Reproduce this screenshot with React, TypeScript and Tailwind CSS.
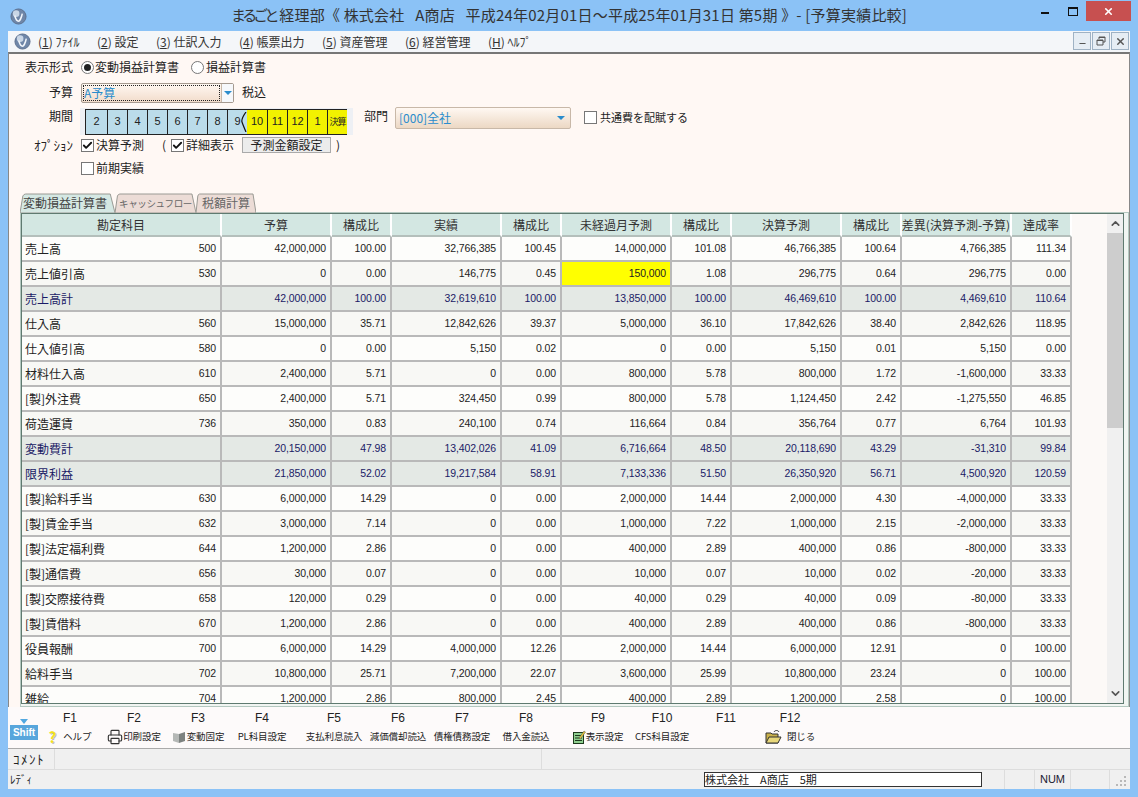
import { Check, Printer, X, Minus, ChevronUp, ChevronDown } from "lucide-react";

type Row = { name: string; code?: string; vals: string[]; kind?: "total"; hit?: number };

const rows: Row[] = [
  { name: "売上高", code: "500", vals: ["42,000,000", "100.00", "32,766,385", "100.45", "14,000,000", "101.08", "46,766,385", "100.64", "4,766,385", "111.34"] },
  { name: "売上値引高", code: "530", vals: ["0", "0.00", "146,775", "0.45", "150,000", "1.08", "296,775", "0.64", "296,775", "0.00"], hit: 4 },
  { name: "売上高計", kind: "total", vals: ["42,000,000", "100.00", "32,619,610", "100.00", "13,850,000", "100.00", "46,469,610", "100.00", "4,469,610", "110.64"] },
  { name: "仕入高", code: "560", vals: ["15,000,000", "35.71", "12,842,626", "39.37", "5,000,000", "36.10", "17,842,626", "38.40", "2,842,626", "118.95"] },
  { name: "仕入値引高", code: "580", vals: ["0", "0.00", "5,150", "0.02", "0", "0.00", "5,150", "0.01", "5,150", "0.00"] },
  { name: "材料仕入高", code: "610", vals: ["2,400,000", "5.71", "0", "0.00", "800,000", "5.78", "800,000", "1.72", "-1,600,000", "33.33"] },
  { name: "[製]外注費", code: "650", vals: ["2,400,000", "5.71", "324,450", "0.99", "800,000", "5.78", "1,124,450", "2.42", "-1,275,550", "46.85"] },
  { name: "荷造運賃", code: "736", vals: ["350,000", "0.83", "240,100", "0.74", "116,664", "0.84", "356,764", "0.77", "6,764", "101.93"] },
  { name: "変動費計", kind: "total", vals: ["20,150,000", "47.98", "13,402,026", "41.09", "6,716,664", "48.50", "20,118,690", "43.29", "-31,310", "99.84"] },
  { name: "限界利益", kind: "total", vals: ["21,850,000", "52.02", "19,217,584", "58.91", "7,133,336", "51.50", "26,350,920", "56.71", "4,500,920", "120.59"] },
  { name: "[製]給料手当", code: "630", vals: ["6,000,000", "14.29", "0", "0.00", "2,000,000", "14.44", "2,000,000", "4.30", "-4,000,000", "33.33"] },
  { name: "[製]賃金手当", code: "632", vals: ["3,000,000", "7.14", "0", "0.00", "1,000,000", "7.22", "1,000,000", "2.15", "-2,000,000", "33.33"] },
  { name: "[製]法定福利費", code: "644", vals: ["1,200,000", "2.86", "0", "0.00", "400,000", "2.89", "400,000", "0.86", "-800,000", "33.33"] },
  { name: "[製]通信費", code: "656", vals: ["30,000", "0.07", "0", "0.00", "10,000", "0.07", "10,000", "0.02", "-20,000", "33.33"] },
  { name: "[製]交際接待費", code: "658", vals: ["120,000", "0.29", "0", "0.00", "40,000", "0.29", "40,000", "0.09", "-80,000", "33.33"] },
  { name: "[製]賃借料", code: "670", vals: ["1,200,000", "2.86", "0", "0.00", "400,000", "2.89", "400,000", "0.86", "-800,000", "33.33"] },
  { name: "役員報酬", code: "700", vals: ["6,000,000", "14.29", "4,000,000", "12.26", "2,000,000", "14.44", "6,000,000", "12.91", "0", "100.00"] },
  { name: "給料手当", code: "702", vals: ["10,800,000", "25.71", "7,200,000", "22.07", "3,600,000", "25.99", "10,800,000", "23.24", "0", "100.00"] },
  { name: "雑給", code: "704", vals: ["1,200,000", "2.86", "800,000", "2.45", "400,000", "2.89", "1,200,000", "2.58", "0", "100.00"] },
];

const headers = ["勘定科目", "予算", "構成比", "実績", "構成比", "未経過月予測", "構成比", "決算予測", "構成比", "差異(決算予測-予算)", "達成率"];
const gridCols = "grid-cols-[200px_110px_60px_110px_60px_110px_60px_110px_60px_110px_60px]";

const menus = [
  { key: "1", label: "ﾌｧｲﾙ", w: "w-[59px]" },
  { key: "2", label: "設定", w: "w-[59px]" },
  { key: "3", label: "仕訳入力", w: "w-[83px]" },
  { key: "4", label: "帳票出力", w: "w-[83px]" },
  { key: "5", label: "資産管理", w: "w-[83px]" },
  { key: "6", label: "経営管理", w: "w-[83px]" },
  { key: "H", label: "ﾍﾙﾌﾟ", w: "w-[59px]" },
];

const Globe = () => (
  <svg width="17" height="17" viewBox="0 0 18 18">
    <circle cx="9" cy="9" r="8" fill="#6f86a8" stroke="#5b6f8c" />
    <circle cx="6.5" cy="6" r="3.5" fill="#c9d6e6" />
    <path d="M5 8c1 4 3 6 4 6s3-3 4-8" fill="none" stroke="#f2f6fb" strokeWidth="1.6" />
  </svg>
);

const Radio = ({ on }: { on?: boolean }) => (
  <span className="w-[13px] h-[13px] rounded-full border border-[#777] bg-white flex items-center justify-center">
    {on && <span className="w-[7px] h-[7px] rounded-full bg-[#222]" />}
  </span>
);

const Box = ({ on }: { on?: boolean }) => (
  <span className="w-[13px] h-[13px] border border-[#777] bg-white flex items-center justify-center">
    {on && <Check size={11} strokeWidth={4} className="text-[#111]" />}
  </span>
);

const ComboArrow = () => (
  <span className="w-0 h-0 border-x-[4px] border-x-transparent border-t-[4px] border-t-[#2a8ccc]" />
);

const Tab = ({ label, active, w, size }: { label: string; active?: boolean; w: string; size: string }) => (
  <div className={`relative h-[20px] ${w} ${size} flex items-center justify-center whitespace-nowrap ${active ? "text-[#444] pr-[5px]" : "text-[#666]"}`}>
    <svg className="absolute inset-0 w-full h-full" viewBox="0 0 100 20" preserveAspectRatio="none">
      <path
        d="M0 20 L3 3 Q4 1 6 1 L95 1 L100 20 Z"
        fill={active ? "#d5e8e3" : "#ecdcd6"}
        stroke="#9a9a94"
        vectorEffect="non-scaling-stroke"
      />
    </svg>
    <span className="relative">{label}</span>
  </div>
);

const fkeys = [
  ["F1", "ヘルプ", "help"],
  ["F2", "印刷設定", "print"],
  ["F3", "変動固定", "box"],
  ["F4", "PL科目設定", ""],
  ["F5", "支払利息読入", ""],
  ["F6", "減価償却読込", ""],
  ["F7", "債権債務設定", ""],
  ["F8", "借入金読込", ""],
  ["F9", "表示設定", "note"],
  ["F10", "CFS科目設定", ""],
  ["F11", "", ""],
  ["F12", "閉じる", "folder"],
];

const FIcon = ({ type }: { type: string }) => {
  if (type === "help") return <span className="text-[#f2e21c] text-[15px] font-bold leading-none mr-[7px] [text-shadow:1px_1px_0_#bbb]">?</span>;
  if (type === "print") return <Printer size={16} strokeWidth={1.7} className="text-[#333]" />;
  if (type === "box")
    return (
      <svg width="14" height="12" viewBox="0 0 14 12" className="mr-[1px]">
        <path d="M1 2l6 1v9l-6-2z" fill="#b5b8b6" />
        <path d="M7 3l6-2v9l-6 2z" fill="#7d8280" />
      </svg>
    );
  if (type === "note")
    return (
      <svg width="13" height="14" viewBox="0 0 13 14">
        <rect x="0.5" y="2.5" width="10" height="11" fill="#8fcf8f" stroke="#1c3a1c" />
        <path d="M2 5.5h7M2 8h7M2 10.5h7" stroke="#1c3a1c" />
        <path d="M6 8l5-7 1.5 1-5 7z" fill="#e8c63a" stroke="#555" strokeWidth="0.5" />
      </svg>
    );
  if (type === "folder")
    return (
      <svg width="17" height="15" viewBox="0 0 17 15" className="mr-[5px]">
        <path d="M1 14V4h5l1 1h6v9z" fill="#c8b04a" stroke="#333" />
        <path d="M1 14l3-6h12l-3 6z" fill="#e8d77a" stroke="#333" />
        <path d="M9 3c1-2 4-2 5 0" fill="none" stroke="#333" />
      </svg>
    );
  return null;
};

const MdiBtn = ({ children }: { children: React.ReactNode }) => (
  <span className="w-[18px] h-[18px] border border-[#9fb2c4] bg-[#e6edf4] flex items-center justify-center text-[#555]">{children}</span>
);

export default function App() {
  const cjk = { fontFamily: '"Noto Sans CJK JP", sans-serif' };
  const latin = { fontFamily: '"Liberation Sans", sans-serif' };
  return (
    <div className="w-[1138px] h-[797px] overflow-hidden bg-[#8bc2f6] flex flex-col text-[#222] text-[12px]" style={cjk}>
      {/* title bar */}
      <div className="h-[31px] shrink-0 relative flex items-center justify-center text-[15px] tracking-[0.2px] text-[#333]">
        <span className="absolute left-[10px] top-[8px]"><Globe /></span>
        <span className="whitespace-pre">
          <span className="tracking-[-3.8px]">まるごと</span> 経理部《 株式会社{"   "}A商店{"   "}平成24年02月01日～平成25年01月31日 第5期 》- [予算実績比較]
        </span>
        <div className="absolute right-[7px] top-[1px] flex items-start">
          <span className="w-[30px] h-[20px] flex items-center justify-center"><span className="w-[8px] h-[2px] bg-[#111] mt-[4px]" /></span>
          <span className="w-[26px] h-[20px] flex items-center justify-center"><span className="w-[10px] h-[9px] border border-[#111] border-t-2" /></span>
          <span className="w-[45px] h-[20px] bg-[#c75050] flex items-center justify-center"><X size={11} strokeWidth={3.5} className="text-white" /></span>
        </div>
      </div>

      <div className="flex-1 mx-[8px] flex flex-col min-h-0">
        {/* menu bar */}
        <div className="h-[21px] shrink-0 bg-[#f4f6f9] flex items-center relative">
          <span className="ml-[6px] w-[24px] flex"><Globe /></span>
          {menus.map((m) => (
            <span key={m.key} className={`${m.w} whitespace-nowrap text-[12px] text-[#333]`}>
              (<span className="underline">{m.key}</span>) {m.label}
            </span>
          ))}
          <div className="absolute right-[1px] top-[1px] flex gap-[1px]">
            <MdiBtn><Minus size={9} strokeWidth={3} className="mt-[5px]" /></MdiBtn>
            <MdiBtn>
              <svg width="10" height="10" viewBox="0 0 10 10" fill="none" stroke="#555">
                <path d="M3 3V1h6v5H7" />
                <path d="M1 4h6v5H1z" />
                <path d="M3 1.5h6M1 4.5h6" />
              </svg>
            </MdiBtn>
            <MdiBtn><X size={11} strokeWidth={3} /></MdiBtn>
          </div>
        </div>

        {/* main */}
        <div className="h-[655px] shrink-0 bg-[#fff8f4] border-t-2 border-t-[#777] border-x border-x-[#888] flex flex-col pl-[11px]">
          <div className="h-[26px] flex items-center">
            <span className="w-[53px] text-right">表示形式</span>
            <span className="ml-[8px]"><Radio on /></span>
            <span className="ml-[1px]">変動損益計算書</span>
            <span className="ml-[12px]"><Radio /></span>
            <span className="ml-[2px]">損益計算書</span>
          </div>
          <div className="h-[24px] flex items-center">
            <span className="w-[53px] text-right">予算</span>
            <div className="ml-[8px] mt-[1px] w-[153px] h-[20px] rounded-[2px] border border-[#a59a90] bg-gradient-to-b from-[#fff8f2] to-[#f2dccb] flex items-center">
              <span className="flex-1 h-[16px] mx-[1px] border border-dotted border-[#222] flex items-center text-[#2a8ccc] leading-none">A予算</span>
              <span className="w-[12px] self-stretch border-l border-[#c8b8a8] bg-[#f6f8fb] flex items-center justify-center"><ComboArrow /></span>
            </div>
            <span className="ml-[8px]">税込</span>
          </div>
          <div className="h-[29px] flex items-start">
            <span className="w-[53px] text-right mt-[3px]">期間</span>
            <div className="ml-[7px] mt-[4px] w-[273px] h-[27px] bg-[#eef0f4] pl-[5px] flex items-center relative">
              <div className="h-[26px] flex border-y border-[#222] text-[11px] leading-none" style={latin}>
                {["2", "3", "4", "5", "6", "7", "8", "9"].map((m, i) => (
                  <span key={m} className={`${i === 0 ? "w-[22px]" : "w-[20px]"} bg-[#bbdcea] border-l border-[#222] flex items-center justify-center`}>{m}</span>
                ))}
                {["10", "11", "12", "1"].map((m, i) => (
                  <span key={m} className={`${i === 0 ? "w-[21px]" : "w-[20px]"} bg-[#f2f200] border-r border-[#222] flex items-center justify-center`}>{m}</span>
                ))}
                <span className="w-[19px] bg-[#f2f200] flex items-center justify-center text-[9px] tracking-[-1px]" style={cjk}>決算</span>
              </div>
              <svg className="absolute left-[161px] top-[4px]" width="6" height="20" viewBox="0 0 6 20" fill="none" stroke="#111" strokeWidth="1.2">
                <path d="M5 0Q0 7 1 10T5 20" />
              </svg>
            </div>
            <span className="ml-[11px] mt-[3px]">部門</span>
            <div className="ml-[7px] mt-[3px] w-[176px] h-[22px] rounded-[2px] border border-[#c8b8a8] bg-gradient-to-b from-[#fff8f2] to-[#ecd8c4] flex items-center justify-between">
              <span className="pl-[3px] text-[#2a8ccc] text-[12px]">[000]全社</span>
              <span className="mr-[5px] flex"><ComboArrow /></span>
            </div>
            <span className="ml-[13px] mt-[7px]"><Box /></span>
            <span className="ml-[3px] mt-[5px] text-[11px]">共通費を配賦する</span>
          </div>
          <div className="h-[24px] flex items-center">
            <span className="w-[53px] text-right text-[13px] whitespace-nowrap">ｵﾌﾟｼｮﾝ</span>
            <span className="ml-[8px]"><Box on /></span>
            <span className="ml-[2px]">決算予測</span>
            <span className="ml-[18px]">(</span>
            <span className="ml-[5px]"><Box on /></span>
            <span className="ml-[2px]">詳細表示</span>
            <span className="ml-[8px] w-[89px] h-[16px] border border-[#aaa] bg-[#ececec] flex items-center justify-center leading-none">予測金額設定</span>
            <span className="ml-[5px]">)</span>
          </div>
          <div className="h-[22px] flex items-center">
            <span className="ml-[61px]"><Box /></span>
            <span className="ml-[2px]">前期実績</span>
          </div>

          {/* tabs */}
          <div className="mt-[14px] flex -mb-[1px] relative z-10">
            <Tab label="変動損益計算書" active w="w-[95px]" size="text-[12px]" />
            <Tab label="キャッシュフロー" w="w-[81px]" size="text-[9.5px] tracking-[-0.4px]" />
            <Tab label="税額計算" w="w-[60px]" size="text-[12px]" />
          </div>

          {/* grid */}
          <div className="h-[495px] w-[1109px] border border-[#b4c8c0] bg-[#f1f5f2]">
            <div className="h-[491px] w-[1103px] border border-[#5f7a70] bg-[#fcf9f7] flex overflow-hidden">
              <div className="w-[1050px] shrink-0 overflow-hidden" style={latin}>
                <div className={`grid ${gridCols} h-[23px]`}>
                  {headers.map((h, i) => (
                    <div key={i} className="bg-[#d3e7e2] border-r-2 border-b-2 border-white border-b-[#b4bfbb] flex items-center justify-center text-[12px] text-[#333] whitespace-nowrap overflow-hidden" style={cjk}>
                      {h}
                    </div>
                  ))}
                </div>
                {rows.map((r, ri) => {
                  const total = r.kind === "total";
                  const bg = total ? "bg-[#e4e9e5]" : ri % 2 === 0 ? "bg-[#fdfdfb]" : "bg-[#f8f8f5]";
                  const fg = total ? "text-[#1a1a66]" : "text-[#222]";
                  return (
                    <div key={r.name} className={`grid ${gridCols} h-[25px] ${fg}`}>
                      <div className={`${bg} border-r-2 border-b-2 border-[#b9b9b9] flex items-center justify-between pl-[3px] pr-[4px]`}>
                        <span className="text-[12px]" style={cjk}>{r.name}</span>
                        <span className="text-[10.5px] tracking-[-0.1px]">{r.code}</span>
                      </div>
                      {r.vals.map((v, i) => (
                        <div
                          key={i}
                          className={`${i === r.hit ? "bg-[#ffff00]" : bg} border-r-2 border-b-2 border-[#b9b9b9] flex items-center justify-end pr-[4px] text-[10.5px] tracking-[-0.1px]`}
                        >
                          {v}
                        </div>
                      ))}
                    </div>
                  );
                })}
              </div>
              <div className="flex-1" />
              <div className="w-[16px] shrink-0 bg-[#f0f0f0] flex flex-col items-center">
                <ChevronUp size={13} strokeWidth={3} className="text-[#555] my-[3px]" />
                <div className="w-full h-[195px] bg-[#cdcdcd]" />
                <div className="flex-1" />
                <ChevronDown size={13} strokeWidth={3} className="text-[#555] my-[3px]" />
              </div>
            </div>
          </div>
        </div>

        {/* function keys */}
        <div className="h-[42px] shrink-0 bg-[#fdfafa] border-b border-[#aaa] flex pl-[2px] pt-[2px]">
          <div className="w-[28px] flex flex-col items-center pt-[10px]">
            <span className="w-0 h-0 border-x-[4px] border-x-transparent border-t-[5px] border-t-[#52a8e0]" />
            <span className="w-[28px] h-[15px] mt-[1px] bg-[#58a6dc] text-white text-[10px] font-bold flex items-center justify-center" style={latin}>Shift</span>
          </div>
          {fkeys.map(([f, label, icon], i) => (
            <div key={f} className={`w-[64px] flex flex-col items-center ${i === 4 || i === 8 ? "ml-[8px]" : ""}`}>
              <span className="h-[19px] text-[12px] leading-[19px]" style={latin}>{f}</span>
              <span className="h-[17px] flex items-center whitespace-nowrap text-[9.5px] tracking-[-0.1px]">
                <FIcon type={icon} />
                {label}
              </span>
            </div>
          ))}
        </div>

        {/* comment + status */}
        <div className="h-[21px] shrink-0 bg-[#f0f0f0] border-b border-[#ddd] flex items-center">
          <span className="w-[47px] h-full border-r border-[#ddd] pl-[5px] text-[13px] tracking-[1.5px] flex items-center whitespace-nowrap">ｺﾒﾝﾄ</span>
          <span className="w-[487px] h-full border-r border-[#ddd]" />
        </div>
        <div className="h-[19px] shrink-0 bg-[#f0f0f0] flex items-center text-[11px]">
          <span className="w-[22px] pl-[2px] text-[11px] whitespace-nowrap">ﾚﾃﾞｨ</span>
          <span className="ml-[674px] w-[278px] h-[15px] bg-white border border-[#333] flex items-center text-[11px] leading-none whitespace-pre">株式会社　A商店　5期</span>
          <span className="ml-[22px] w-[31px] h-full border-x border-[#ddd]" />
          <span className="w-[36px] h-full border-r border-[#ddd] flex items-center justify-center text-[#223] text-[11px]" style={latin}>NUM</span>
          <span className="w-[39px] h-full border-r border-[#ddd]" />
          <svg width="12" height="12" viewBox="0 0 12 12" className="ml-[6px] mt-[4px]" fill="#b8b8b8">
            <rect x="8" y="0" width="2" height="2" />
            <rect x="4" y="4" width="2" height="2" />
            <rect x="8" y="4" width="2" height="2" />
            <rect x="0" y="8" width="2" height="2" />
            <rect x="4" y="8" width="2" height="2" />
            <rect x="8" y="8" width="2" height="2" />
          </svg>
        </div>
      </div>
      <div className="h-[7px] shrink-0" />
    </div>
  );
}
